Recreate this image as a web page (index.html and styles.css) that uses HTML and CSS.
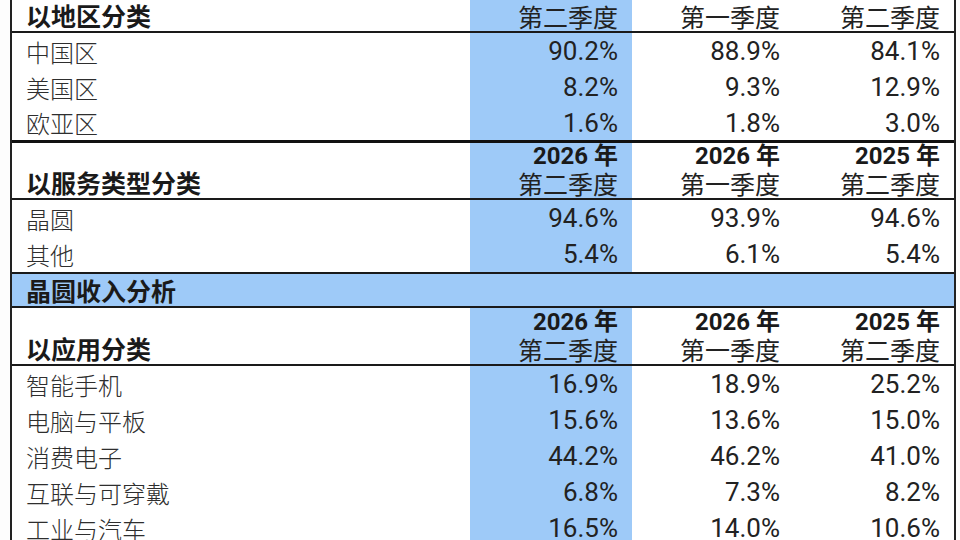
FILE: index.html
```html
<!DOCTYPE html>
<html lang="zh-CN">
<head>
<meta charset="utf-8">
<title>收入分析</title>
<link rel="stylesheet" href="styles.css">
</head>
<body>
<div class="rev">
  <div class="row head first">
    <div class="label">以地区分类</div>
    <div class="num hl"><b>2026 年</b><span>第二季度</span></div>
    <div class="num"><b>2026 年</b><span>第一季度</span></div>
    <div class="num"><b>2025 年</b><span>第二季度</span></div>
  </div>
  <div class="row"><div class="label">中国区</div><div class="num hl">90.2%</div><div class="num">88.9%</div><div class="num">84.1%</div></div>
  <div class="row"><div class="label">美国区</div><div class="num hl">8.2%</div><div class="num">9.3%</div><div class="num">12.9%</div></div>
  <div class="row last"><div class="label">欧亚区</div><div class="num hl">1.6%</div><div class="num">1.8%</div><div class="num">3.0%</div></div>

  <div class="row head">
    <div class="label">以服务类型分类</div>
    <div class="num hl"><b>2026 年</b><span>第二季度</span></div>
    <div class="num"><b>2026 年</b><span>第一季度</span></div>
    <div class="num"><b>2025 年</b><span>第二季度</span></div>
  </div>
  <div class="row"><div class="label">晶圆</div><div class="num hl">94.6%</div><div class="num">93.9%</div><div class="num">94.6%</div></div>
  <div class="row"><div class="label">其他</div><div class="num hl">5.4%</div><div class="num">6.1%</div><div class="num">5.4%</div></div>

  <div class="band">晶圆收入分析</div>

  <div class="row head third">
    <div class="label">以应用分类</div>
    <div class="num hl"><b>2026 年</b><span>第二季度</span></div>
    <div class="num"><b>2026 年</b><span>第一季度</span></div>
    <div class="num"><b>2025 年</b><span>第二季度</span></div>
  </div>
  <div class="row"><div class="label">智能手机</div><div class="num hl">16.9%</div><div class="num">18.9%</div><div class="num">25.2%</div></div>
  <div class="row"><div class="label">电脑与平板</div><div class="num hl">15.6%</div><div class="num">13.6%</div><div class="num">15.0%</div></div>
  <div class="row"><div class="label">消费电子</div><div class="num hl">44.2%</div><div class="num">46.2%</div><div class="num">41.0%</div></div>
  <div class="row"><div class="label">互联与可穿戴</div><div class="num hl">6.8%</div><div class="num">7.3%</div><div class="num">8.2%</div></div>
  <div class="row"><div class="label">工业与汽车</div><div class="num hl">16.5%</div><div class="num">14.0%</div><div class="num">10.6%</div></div>
</div>
</body>
</html>
```

FILE: styles.css
```css
html, body {
  margin: 0;
  padding: 0;
  background: #fdfdfd;
  overflow: hidden;
}

body {
  width: 960px;
  height: 540px;
  color: #222;
  font-family: Roboto, "Noto Sans CJK SC", sans-serif;
}

.rev {
  box-sizing: border-box;
  width: 946px;
  margin: -24px 0 0 10px;
  border-left: 2px solid #222;
  border-right: 2px solid #222;
  background: #fff;
}

.row {
  box-sizing: border-box;
  display: grid;
  grid-template-columns: 458px 162px 162px 1fr;
  height: 36px;
}

.label {
  display: flex;
  align-items: center;
  padding-left: 14px;
  font-family: "Noto Sans CJK SC", sans-serif;
  font-size: 24px;
  font-weight: 300;
  color: #2e2e2e;
  white-space: nowrap;
}

.num {
  display: flex;
  align-items: center;
  justify-content: flex-end;
  padding-right: 14px;
  font-family: Roboto, "Noto Sans CJK SC", sans-serif;
  font-size: 26px;
  color: #222;
  white-space: nowrap;
}

.hl {
  background: #9ecaf8;
}

.row.last {
  height: 38px;
  border-bottom: 3px solid #111;
}

.row.head {
  height: 57px;
  border-bottom: 2px solid #1a1a1a;
}

.row.head.third {
  height: 58px;
}

.head .label {
  align-items: flex-end;
  padding-bottom: 2px;
  font-size: 25px;
  font-weight: 700;
  color: #1a1a1a;
  line-height: 27px;
}

.head .num {
  flex-direction: column;
  align-items: flex-end;
  justify-content: flex-end;
  padding-bottom: 1px;
}

.head .num b {
  font-family: Roboto, "Noto Sans CJK SC", sans-serif;
  font-size: 24px;
  font-weight: 700;
  line-height: 27px;
  color: #1a1a1a;
}

.head .num span {
  font-family: "Noto Sans CJK SC", sans-serif;
  font-size: 25px;
  font-weight: 400;
  line-height: 27px;
  color: #222;
}

.band {
  box-sizing: border-box;
  height: 36px;
  display: flex;
  align-items: center;
  padding-left: 14px;
  background: #9ecaf8;
  border-top: 2px solid #1a1a1a;
  border-bottom: 2px solid #1a1a1a;
  font-family: "Noto Sans CJK SC", sans-serif;
  font-size: 25px;
  font-weight: 700;
  color: #1a1a1a;
}
```
